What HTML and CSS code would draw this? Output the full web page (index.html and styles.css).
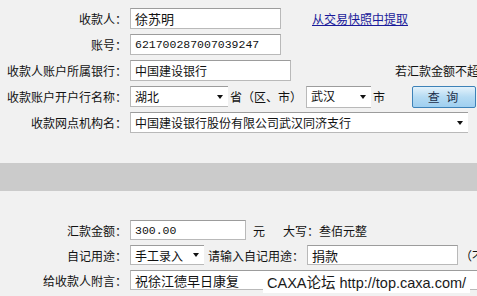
FILE: index.html
```html
<!DOCTYPE html>
<html lang="zh-CN">

<head>
    <meta charset="UTF-8">
    <title>汇款</title>
    <link rel="stylesheet" href="styles.css">
</head>

<body>
    <div class="form haut">
        <div class="ligne">
            <span class="libelle">收款人：</span>
            <span class="champ w-151 grand">徐苏明</span>
            <a href="#" class="lien">从交易快照中提取</a>
        </div>
        <div class="ligne">
            <span class="libelle">账号：</span>
            <span class="champ w-151 chiffres">621700287007039247</span>
        </div>
        <div class="ligne">
            <span class="libelle">收款人账户所属银行：</span>
            <span class="champ w-161">中国建设银行</span>
            <span class="note">若汇款金额不超</span>
        </div>
        <div class="ligne">
            <span class="libelle">收款账户开户行名称：</span>
            <span class="champ liste w-98">湖北<i class="fleche"></i></span>
            <span class="texte">省（区、市）</span>
            <span class="champ liste w-65 haut-22">武汉<i class="fleche"></i></span>
            <span class="texte">市</span>
            <button class="bouton-requete">查 询</button>
        </div>
        <div class="ligne">
            <span class="libelle">收款网点机构名：</span>
            <span class="champ liste w-338">中国建设银行股份有限公司武汉同济支行<i class="fleche"></i></span>
        </div>
    </div>

    <div class="bande"></div>

    <div class="form bas">
        <div class="ligne">
            <span class="libelle">汇款金额：</span>
            <span class="champ w-116 chiffres">300.00</span>
            <span class="texte unite">元</span>
            <span class="texte majuscule">大写：叁佰元整</span>
        </div>
        <div class="ligne">
            <span class="libelle">自记用途：</span>
            <span class="champ liste w-74">手工录入<i class="fleche"></i></span>
            <span class="texte invite">请输入自记用途：</span>
            <span class="champ w-151 grand decale">捐款</span>
            <span class="texte">（不</span>
        </div>
        <div class="ligne">
            <span class="libelle">给收款人附言：</span>
            <span class="champ w-360 grand">祝徐江德早日康复</span>
        </div>
    </div>

    <div class="filigrane">CAXA论坛 http://top.caxa.com/</div>
</body>

</html>
```

FILE: styles.css
```css
body {
    font-family: "Noto Sans CJK SC", "Noto Sans", sans-serif;
    font-size: 12px;
    color: #111;
    background-color: #f1f1f1;
    margin: 0;
    padding: 0;
    width: 477px;
    height: 296px;
    overflow: hidden;
    position: relative;
}

.form {
    display: flex;
    flex-direction: column;
    white-space: nowrap;
}

.haut {
    padding-top: 8px;
    gap: 5px;
}

.bas {
    padding-top: 29px;
    gap: 5px;
}

.ligne {
    display: flex;
    align-items: center;
    height: 21px;
}

.bas .ligne {
    height: 20px;
}

.libelle {
    width: 130px;
    padding-right: 3px;
    box-sizing: border-box;
    text-align: right;
    flex-shrink: 0;
}

.champ {
    display: flex;
    align-items: center;
    height: 100%;
    box-sizing: border-box;
    border: 1px solid #b9b9b9;
    border-top-color: #9c9c9c;
    background-color: #fff;
    padding: 0 4px;
    flex-shrink: 0;
    position: relative;
}

.grand {
    font-size: 13px;
}

.chiffres {
    font-family: "Liberation Mono", monospace;
    font-size: 11.5px;
}

.w-65 { width: 65px; }
.w-74 { width: 74px; }
.w-98 { width: 98px; }
.w-116 { width: 116px; }
.w-151 { width: 151px; }
.w-161 { width: 161px; }
.w-338 { width: 338px; }
.w-360 { width: 360px; }

.haut-22 {
    height: 22px;
    align-items: flex-start;
}

.liste {
    border-right: none;
}

.liste .fleche {
    position: absolute;
    right: 5px;
    top: 50%;
    margin-top: -2px;
    border-left: 3.5px solid transparent;
    border-right: 3.5px solid transparent;
    border-top: 4px solid #111;
}

.lien {
    margin-left: 31px;
    color: #1a1a9a;
    text-decoration: underline;
}

.note {
    margin-left: 104px;
    flex-shrink: 0;
}

.texte {
    margin-left: 2px;
    flex-shrink: 0;
}

.ligne .liste.w-65 {
    margin-left: 4px;
}

.bouton-requete {
    margin-left: 27px;
    width: 64px;
    height: 22px;
    flex-shrink: 0;
    border: 1px solid #3d82b8;
    border-radius: 2px;
    background: linear-gradient(#e4f2fb, #b5dbf3 50%, #9fcff0);
    color: #1c2f4a;
    font-family: inherit;
    font-size: 12px;
    letter-spacing: 2px;
    padding: 0;
    cursor: pointer;
}

.bande {
    margin-top: 30px;
    height: 28px;
    background-color: #cbcbcb;
}

.unite {
    margin-left: 7px;
}

.majuscule {
    margin-left: 18px;
}

.invite {
    margin-left: 4px;
}

.decale {
    margin-left: 3px;
    align-items: flex-start;
}

.filigrane {
    position: absolute;
    left: 263px;
    top: 273px;
    padding: 0 4px;
    white-space: nowrap;
    font-family: "Liberation Sans", "Noto Sans CJK SC", sans-serif;
    font-size: 14.5px;
    line-height: 20px;
    color: #1a1a1a;
    background-color: #fff;
}
```
